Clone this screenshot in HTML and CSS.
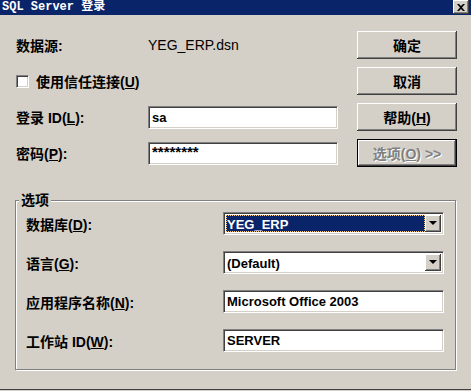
FILE: index.html
```html
<!DOCTYPE html>
<html lang="zh-CN">
<head>
  <meta charset="UTF-8">
  <title>SQL Server 登录</title>
  <link rel="stylesheet" href="styles.css">
</head>
<body>
  <div class="dialog">
    <div class="titlebar">
      <span class="title">SQL Server 登录</span>
      <span class="close-btn">
        <svg width="8" height="7" viewBox="0 0 8 7"><path d="M0 0h2l2 2 2-2h2L5 3.5 8 7H6L4 5 2 7H0l3-3.5z" fill="#000"/></svg>
      </span>
    </div>

    <div class="body">
      <!-- 登录信息 -->
      <div class="login-grid">
        <span class="label">数据源:</span>
        <span class="value">YEG_ERP.dsn</span>
        <button class="btn">确定</button>

        <label class="check">
          <span class="check-box"></span>
          <span>使用信任连接(<u>U</u>)</span>
        </label>
        <button class="btn">取消</button>

        <span class="label">登录 ID(<u>L</u>):</span>
        <span class="field">sa</span>
        <button class="btn">帮助(<u>H</u>)</button>

        <span class="label">密码(<u>P</u>):</span>
        <span class="field password">********</span>
        <button class="btn btn-default" disabled>选项(<u>O</u>) &gt;&gt;</button>
      </div>

      <!-- 选项 -->
      <fieldset class="group">
        <legend>选项</legend>
        <div class="options-grid">
          <span class="label">数据库(<u>D</u>):</span>
          <div class="combo">
            <span class="combo-value selected"><span class="focus">YEG_ERP</span></span>
            <span class="combo-arrow"></span>
          </div>

          <span class="label">语言(<u>G</u>):</span>
          <div class="combo">
            <span class="combo-value">(Default)</span>
            <span class="combo-arrow"></span>
          </div>

          <span class="label">应用程序名称(<u>N</u>):</span>
          <span class="field">Microsoft Office 2003</span>

          <span class="label">工作站 ID(<u>W</u>):</span>
          <span class="field">SERVER</span>
        </div>
      </fieldset>
    </div>
  </div>
</body>
</html>
```

FILE: styles.css
```css
:root {
  --face: #D4D0C8;
  --shadow: #808080;
  --dark: #404040;
  --light: #fff;
  --title: #0A246A;
}
* {
  margin: 0;
  padding: 0;
  box-sizing: border-box;
}
body {
  font-family: "Liberation Sans", "Noto Sans CJK SC", sans-serif;
  background: var(--face);
  color: #000;
  width: 471px;
  height: 391px;
  overflow: hidden;
}
.dialog {
  height: 390px;
  border-bottom: 1px solid var(--dark);
}
/* Заголовок */
.titlebar {
  height: 15px;
  background: var(--title);
  display: flex;
  align-items: flex-start;
  justify-content: space-between;
}
.title {
  font-family: "Liberation Mono", "Noto Sans CJK SC", monospace;
  font-weight: bold;
  font-size: 12px;
  line-height: 15px;
  color: var(--light);
  padding-left: 2px;
}
.close-btn {
  width: 16px;
  height: 14px;
  margin-right: 2px;
  background: var(--face);
  display: flex;
  align-items: center;
  justify-content: center;
  box-shadow: inset -1px -1px var(--dark), inset 1px 1px var(--light), inset -2px -2px var(--shadow);
}
.body {
  padding: 16px 0 0 16px;
}
/* Верхня частина */
.login-grid {
  display: grid;
  grid-template-columns: 113px 190px 100px;
  grid-auto-rows: 28px;
  column-gap: 19px;
  row-gap: 8px;
  align-items: center;
}
.label {
  font-size: 14px;
  font-weight: bold;
  white-space: nowrap;
}
.value {
  font-size: 14px;
}
.check {
  grid-column: span 2;
  display: flex;
  align-items: center;
  gap: 7px;
  font-size: 14px;
  font-weight: bold;
}
.check-box {
  width: 13px;
  height: 13px;
  background: var(--light);
  border: 1px solid;
  border-color: var(--shadow) var(--light) var(--light) var(--shadow);
  box-shadow: inset 1px 1px var(--dark), inset -1px -1px var(--face);
}
.btn {
  height: 28px;
  background: var(--face);
  border: none;
  font-family: inherit;
  font-size: 14px;
  font-weight: bold;
  color: #000;
  box-shadow: inset -1px -1px var(--dark), inset 1px 1px var(--light), inset -2px -2px var(--shadow);
}
.btn-default {
  color: var(--shadow);
  text-shadow: 1px 1px var(--light);
  box-shadow: inset 0 0 0 1px #000, inset -2px -2px var(--dark), inset 2px 2px var(--light), inset -3px -3px var(--shadow);
}
.field {
  height: 23px;
  background: var(--light);
  border: 1px solid;
  border-color: var(--shadow) var(--light) var(--light) var(--shadow);
  box-shadow: inset 1px 1px var(--dark), inset -1px -1px var(--face);
  font-size: 13px;
  font-weight: bold;
  line-height: 21px;
  padding-left: 3px;
  white-space: nowrap;
  overflow: hidden;
}
.password {
  font-size: 15px;
  line-height: 17px;
}
/* Група опцій */
.group {
  width: 441px;
  margin: 26px 0 0 -1px;
  border: 1px solid var(--shadow);
  box-shadow: 1px 1px var(--light), inset 1px 1px var(--light);
  padding: 4px 11px 17px 10px;
}
.group legend {
  font-size: 14px;
  font-weight: bold;
  line-height: 15px;
  padding: 0 2px;
  margin-left: -7px;
  background: var(--face);
}
.options-grid {
  display: grid;
  grid-template-columns: 197px 221px;
  grid-auto-rows: 23px;
  row-gap: 16px;
  align-items: center;
}
.combo {
  height: 23px;
  background: var(--light);
  border: 1px solid;
  border-color: var(--shadow) var(--light) var(--light) var(--shadow);
  box-shadow: inset 1px 1px var(--dark), inset -1px -1px var(--face);
  display: flex;
  padding: 2px;
}
.combo-value {
  flex: 1;
  font-size: 13px;
  font-weight: bold;
  line-height: 19px;
  padding-left: 1px;
}
.combo-value.selected {
  background: var(--title);
  color: var(--light);
  padding: 0;
}
.focus {
  display: block;
  height: 100%;
  padding-left: 1px;
  outline: 1px dotted #ffd080;
  outline-offset: -1px;
}
.combo-arrow {
  width: 16px;
  background: var(--face);
  box-shadow: inset -1px -1px var(--dark), inset 1px 1px var(--light), inset -2px -2px var(--shadow);
  display: flex;
  align-items: center;
  justify-content: center;
}
.combo-arrow::after {
  content: "";
  border-left: 4px solid transparent;
  border-right: 4px solid transparent;
  border-top: 4px solid #000;
  margin: 0 1px 1px 0;
}
```
